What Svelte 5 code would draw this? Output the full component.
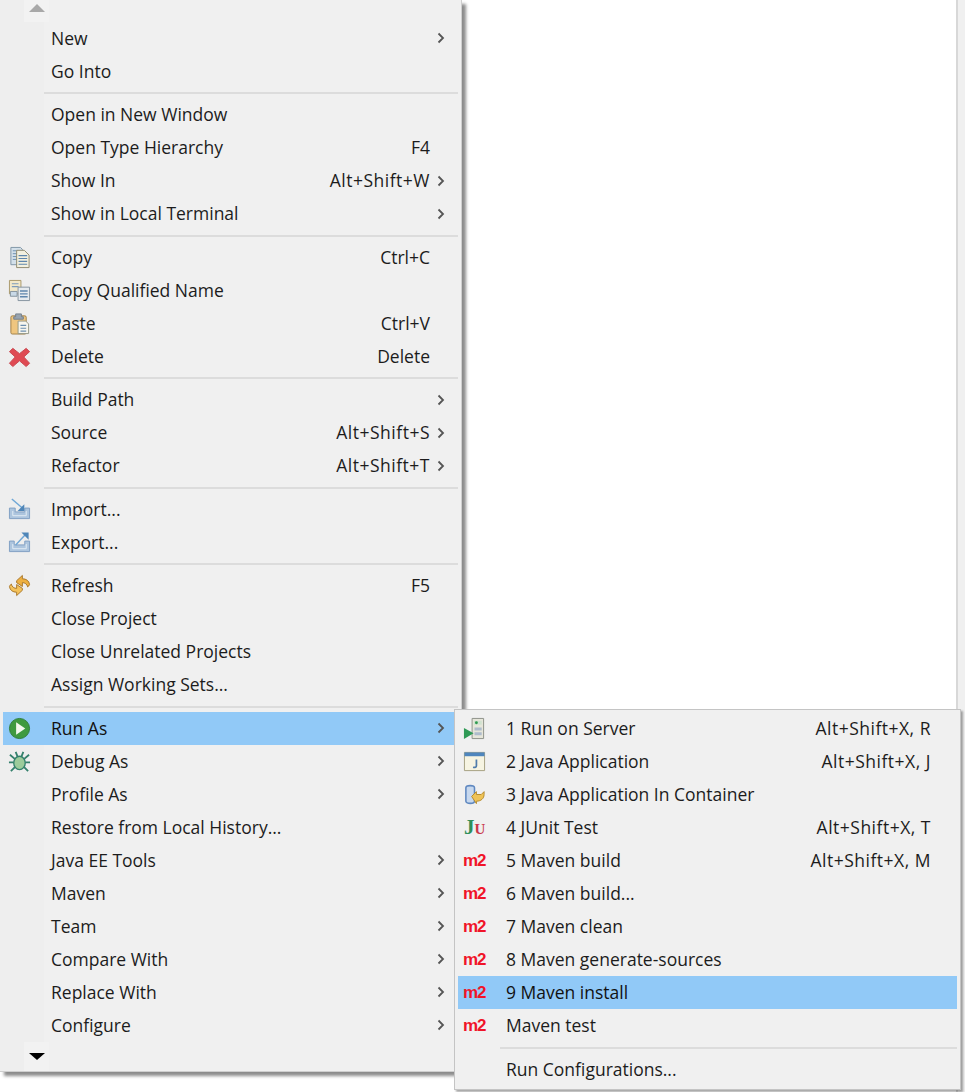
<script>
  const groups = [
    [
      { label: "New", arrow: true },
      { label: "Go Into" },
    ],
    [
      { label: "Open in New Window" },
      { label: "Open Type Hierarchy", key: "F4" },
      { label: "Show In", key: "Alt+Shift+W", arrow: true },
      { label: "Show in Local Terminal", arrow: true },
    ],
    [
      { label: "Copy", key: "Ctrl+C", icon: "copy" },
      { label: "Copy Qualified Name", icon: "copyq" },
      { label: "Paste", key: "Ctrl+V", icon: "paste" },
      { label: "Delete", key: "Delete", icon: "delete" },
    ],
    [
      { label: "Build Path", arrow: true },
      { label: "Source", key: "Alt+Shift+S", arrow: true },
      { label: "Refactor", key: "Alt+Shift+T", arrow: true },
    ],
    [
      { label: "Import...", icon: "import" },
      { label: "Export...", icon: "export" },
    ],
    [
      { label: "Refresh", key: "F5", icon: "refresh" },
      { label: "Close Project" },
      { label: "Close Unrelated Projects" },
      { label: "Assign Working Sets..." },
    ],
    [
      { label: "Run As", arrow: true, icon: "run", active: true },
      { label: "Debug As", arrow: true, icon: "debug" },
      { label: "Profile As", arrow: true },
      { label: "Restore from Local History..." },
      { label: "Java EE Tools", arrow: true },
      { label: "Maven", arrow: true },
      { label: "Team", arrow: true },
      { label: "Compare With", arrow: true },
      { label: "Replace With", arrow: true },
      { label: "Configure", arrow: true },
    ],
  ];

  const subGroups = [
    [
      { label: "1 Run on Server", key: "Alt+Shift+X, R", icon: "server" },
      { label: "2 Java Application", key: "Alt+Shift+X, J", icon: "java" },
      { label: "3 Java Application In Container", icon: "container" },
      { label: "4 JUnit Test", key: "Alt+Shift+X, T", icon: "junit" },
      { label: "5 Maven build", key: "Alt+Shift+X, M", icon: "m2" },
      { label: "6 Maven build...", icon: "m2" },
      { label: "7 Maven clean", icon: "m2" },
      { label: "8 Maven generate-sources", icon: "m2" },
      { label: "9 Maven install", icon: "m2", active: true },
      { label: "Maven test", icon: "m2" },
    ],
    [{ label: "Run Configurations..." }],
  ];
</script>

{#snippet icon(name)}
  {#if name === "copy"}
    <svg viewBox="0 0 24 24" class="ico">
      <path d="M3 1.500h10l2 2v16H3z" fill="#d3e0ea" stroke="#7f95a6" />
      <path d="M5 5h6M5 8h6M5 11h6M5 14h6" stroke="#6d8fb0" />
      <path d="M9 4.500h8l5 5v13H9z" fill="#f3f0df" stroke="#8f8a70" />
      <path d="M11 10h9M11 13h9M11 16h9M11 19h9" stroke="#5f86ad" stroke-width="1.200" />
    </svg>
  {:else if name === "copyq"}
    <svg viewBox="0 0 24 24" class="ico">
      <path d="M1.500 1.500h12v14h-12z" fill="#f3e8c8" stroke="#a8986a" />
      <path d="M4 5h7M4 8h7" stroke="#7d9abb" stroke-width="1.200" />
      <path d="M10.500 8.500h12v14h-12z" fill="#e5eaee" stroke="#84929e" />
      <path d="M12.500 12.500h8M12.500 15.500h8M12.500 18.500h8" stroke="#5f86ad" stroke-width="1.400" />
      <path d="M2.500 13h7v5h-7z" fill="#c9d9e7" stroke="#84929e" />
    </svg>
  {:else if name === "paste"}
    <svg viewBox="0 0 24 24" class="ico">
      <rect x="3" y="4" width="16" height="19" rx="1.500" fill="#efc67f" stroke="#a07f48" />
      <path d="M8 5V2h6v3h2v2.500H6V5z" fill="#98a4b0" stroke="#74808c" />
      <path d="M10.500 9.500h8l3 3v10h-11z" fill="#f7f6ee" stroke="#939886" />
      <path d="M13 14h6M13 17h6M13 20h6" stroke="#6d8fb0" stroke-width="1.200" />
    </svg>
  {:else if name === "delete"}
    <svg viewBox="0 0 24 24" class="ico">
      <path d="M5 3.500l7 5.500 7-5.500 3.500 3.500-6 5.500 6 6.500-3.500 3.500-7-6-7 6-3.500-3.500 6-6.500-6-5.500z" fill="#df4a53" stroke="#c9474f" stroke-linejoin="round" />
    </svg>
  {:else if name === "import"}
    <svg viewBox="0 0 24 24" class="ico">
      <path d="M1.500 10.500h6v4h10v-4h5v11h-21z" fill="#adc5de" stroke="#7f9fc2" />
      <path d="M5 13.500v5h14v-5" fill="none" stroke="#e4edf5" />
      <path d="M4 1l11 9.500" stroke="#6fa7d6" stroke-width="1.500" />
      <path d="M10 13.500h7v-7z" fill="#4f86b8" />
    </svg>
  {:else if name === "export"}
    <svg viewBox="0 0 24 24" class="ico">
      <path d="M1.500 10.500h5v4h11v-4h5v11h-21z" fill="#adc5de" stroke="#7f9fc2" />
      <path d="M5 13.500v5h14v-5" fill="none" stroke="#e4edf5" />
      <path d="M8 14.500L18 4" stroke="#6fa7d6" stroke-width="1.500" />
      <path d="M14 1.500h7.500V9z" fill="#4f86b8" />
    </svg>
  {:else if name === "refresh"}
    <svg viewBox="0 0 24 24" class="ico">
      <path d="M9 7l6-5.500v3.500c4 0 7 2 7.500 6-.5 1-1 2-2 2.500-.5-3-3-4.500-5.500-4.500V13L9 9z" fill="#eeb040" stroke="#a9772a" stroke-linejoin="round" />
      <path d="M15 17l-6 5.500V19c-4 0-7-2-7.500-6 .5-1 1-2 2-2.500C4 13.500 6.500 15 9 15v-4l6 4z" fill="#f4c25a" stroke="#a9772a" stroke-linejoin="round" />
    </svg>
  {:else if name === "run"}
    <svg viewBox="0 0 24 24" class="ico">
      <circle cx="12" cy="12" r="10.500" fill="#3f9a3f" stroke="#2f7d3a" />
      <path d="M8.500 5.500l9.500 6.500-9.500 6.500z" fill="#f4f8ee" />
    </svg>
  {:else if name === "debug"}
    <svg viewBox="0 0 24 24" class="ico">
      <path d="M2 5l6 5M22 5l-6 5M1 13h5M23 13h-5M3 22l5-5M21 22l-5-5M8 2l2 5M16 2l-2 5" stroke="#34806c" stroke-width="1.900" />
      <ellipse cx="12" cy="13.500" rx="6" ry="7" fill="#9ccb9b" stroke="#34806c" stroke-width="1.400" />
    </svg>
  {:else if name === "server"}
    <svg viewBox="0 0 24 24" class="ico">
      <path d="M9.500 1.500h12v21h-12z" fill="#e6e6da" stroke="#8c9088" />
      <path d="M11.500 4h8v4h-8z" fill="#cfe2cf" />
      <circle cx="14" cy="6" r="1.500" fill="#2f9a4f" />
      <path d="M12 11h7.500v3H12zM12 16h7.500v3H12z" fill="#aebccc" />
      <path d="M1 11.500l10 5.500-10 6z" fill="#2f9a55" />
    </svg>
  {:else if name === "java"}
    <svg viewBox="0 0 24 24" class="ico">
      <path d="M1.500 2.500h21v19h-21z" fill="#f6f4e2" stroke="#a49f7f" />
      <path d="M1.500 2.500h21v4h-21z" fill="#4f86bd" />
      <path d="M14 10v6.500c0 1.500-1.500 2-3.500 1.500" fill="none" stroke="#4f7cab" stroke-width="1.800" />
    </svg>
  {:else if name === "container"}
    <svg viewBox="0 0 24 24" class="ico">
      <path d="M3 5c0-3 9-3 9 0v14c0 3-9 3-9 0z" fill="#c7d8ee" stroke="#5f88c0" stroke-width="1.600" />
      <path d="M9 14l5-5v3h5l3-3v3c0 4-3 7-8 7v2.500z" fill="#efc357" stroke="#b58a2b" />
    </svg>
  {/if}
{/snippet}

{#snippet row(item, sub)}
  <div class="row" class:active={item.active} class:subrow={sub}>
    <span class="slot">
      {#if item.icon === "m2"}
        <span class="m2">m2</span>
      {:else if item.icon === "junit"}
        <span class="ju"><span class="j">J</span><span class="u">U</span></span>
      {:else if item.icon}
        {@render icon(item.icon)}
      {/if}
    </span>
    <span class="label">{item.label}</span>
    {#if item.key}<span class="key" class:combo={item.key.startsWith("Alt")}>{item.key}</span>{/if}
    {#if !sub}
      <span class="chev">
        {#if item.arrow}
          <svg viewBox="0 0 8 12" width="8" height="12"><path d="M1.500 1.500L6 6l-4.500 4.500" fill="none" stroke="#555" stroke-width="1.800" /></svg>
        {/if}
      </span>
    {/if}
  </div>
{/snippet}

<div class="page">
  <div class="menu">
    <div class="scroll up"><span class="box"><span class="tri-up"></span></span></div>
    {#each groups as group, i}
      {#if i > 0}<div class="sep"></div>{/if}
      {#each group as item}
        {@render row(item, false)}
      {/each}
    {/each}
    <div class="scroll down"><span class="box"><span class="tri-down"></span></span></div>
  </div>

  <div class="submenu">
    {#each subGroups as group, i}
      {#if i > 0}<div class="sep"></div>{/if}
      {#each group as item}
        {@render row(item, true)}
      {/each}
    {/each}
  </div>
</div>

<style>
  :global(body) {
    margin: 0;
    background: #fff;
  }

  .page {
    position: relative;
    width: 965px;
    height: 1092px;
    overflow: hidden;
    background: #fff;
    font-family: "Open Sans", "Noto Sans", sans-serif;
    font-size: 17.500px;
    color: #1c1c1c;
  }

  /* strip of the window behind the menus */
  .page::after {
    content: "";
    position: absolute;
    top: 0;
    right: 0;
    bottom: 0;
    width: 7px;
    border-left: 2px solid #d8d8d8;
    background: #f0f0f0;
  }

  .menu {
    width: 462px;
    height: 1072px;
    box-sizing: border-box;
    padding: 0 3px 0 3px;
    background: linear-gradient(to right, #eeeeee 44px, #f0f0f0 44px);
    border-right: 1px solid #cfcfcf;
    border-bottom: 1px solid #cfcfcf;
    box-shadow: 4px 4px 3px rgba(0, 0, 0, 0.45);
  }

  .scroll {
    display: flex;
    padding-left: 21px;
  }

  .up {
    height: 21.750px;
  }

  .down {
    height: 29px;
  }

  .box {
    width: 25px;
    display: flex;
    align-items: center;
    justify-content: center;
    background: #f2f2f2;
  }

  .up .box {
    padding-bottom: 6px;
    box-sizing: border-box;
  }

  .tri-up,
  .tri-down {
    width: 0;
    height: 0;
    border-left: 8px solid transparent;
    border-right: 8px solid transparent;
  }

  .tri-up {
    border-bottom: 8px solid #a8a8a8;
  }

  .tri-down {
    border-top: 7px solid #000;
  }

  .row {
    display: flex;
    align-items: center;
    height: 33px;
    line-height: 33px;
    white-space: nowrap;
  }

  .active {
    background: #91c9f7;
    color: #111;
  }

  .slot {
    flex: none;
    width: 48px;
    display: flex;
    align-items: center;
    padding-left: 5px;
    box-sizing: border-box;
  }

  .ico {
    width: 23px;
    height: 23px;
  }

  .label {
    flex: 1;
  }

  .key {
    margin-right: 6px;
  }

  .combo {
    letter-spacing: 0.500px;
  }

  .chev {
    flex: none;
    width: 22px;
    display: flex;
    align-items: center;
    padding-left: 1px;
    box-sizing: border-box;
  }

  .sep {
    height: 2px;
    margin: 4.250px 0 4.250px 41px;
    background: #dcdcdc;
  }

  .submenu {
    position: absolute;
    z-index: 1;
    left: 454px;
    top: 709px;
    width: 507px;
    height: 381px;
    box-sizing: border-box;
    padding: 2px 3px 0 3px;
    background: #f0f0f0;
    border: 1px solid #c4c4c4;
    box-shadow: 2px 2px 2px rgba(0, 0, 0, 0.35);
  }

  .submenu .sep {
    margin: 4.500px 0 4.500px 42px;
  }

  .submenu .key {
    margin-right: 26px;
  }

  .m2 {
    font-family: "Liberation Sans", sans-serif;
    font-size: 17px;
    font-weight: 700;
    letter-spacing: -1.200px;
    color: #f01428;
  }

  .ju {
    font-family: "Liberation Serif", serif;
    font-weight: 700;
    font-size: 21px;
    line-height: 24px;
    padding-left: 1px;
  }

  .j {
    color: #2f8f5a;
  }

  .u {
    color: #c9384a;
    font-size: 15px;
  }
</style>
